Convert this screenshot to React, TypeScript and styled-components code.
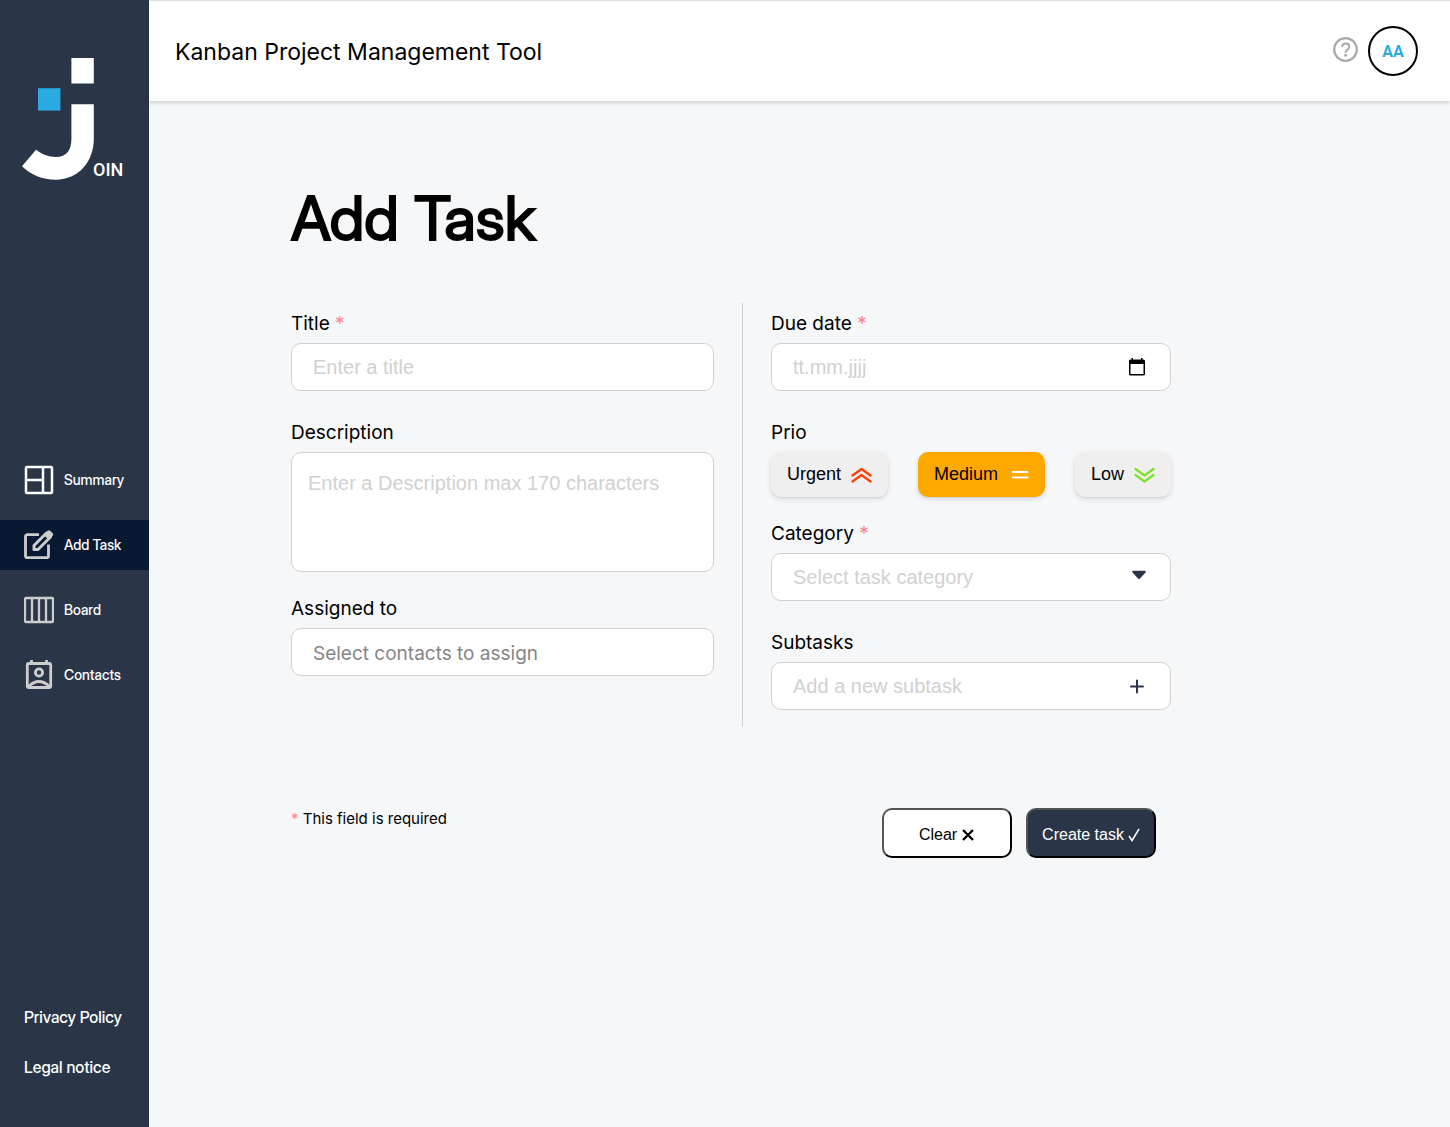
import React, { useState } from "react";
import styled, { createGlobalStyle, css } from "styled-components";

const GlobalStyle = createGlobalStyle`
  *, *::before, *::after { box-sizing: border-box; }
  body {
    margin: 0;
    background: #f6f7f8;
    color: #000;
    font-family: Inter, "Liberation Sans", sans-serif;
  }
`;

const arial = `"Liberation Sans", Arial, sans-serif`;
const display = `"Inter Display", Inter, sans-serif`;

const Page = styled.div`
  display: flex;
  min-height: 100vh;
`;

const Sidebar = styled.aside`
  display: flex;
  flex-direction: column;
  flex: 0 0 149px;
  padding: 58px 0 35px;
  background: #2a3647;
`;

const Logo = styled.svg`
  display: block;
  width: 101px;
  height: 124px;
  margin: 0 auto 273px 22px;
`;

const Nav = styled.nav`
  display: flex;
  flex-direction: column;
  gap: 15px;
`;

const NavLink = styled.a<{ $active?: boolean }>`
  display: flex;
  align-items: center;
  gap: 10px;
  height: 50px;
  padding-left: 24px;
  background: ${(p) => (p.$active ? "#091931" : "transparent")};
  color: #fff;
  font-family: ${display};
  font-size: 14px;
  font-weight: 500;
  line-height: 16px;
  text-decoration: none;
`;

const NavIcon = styled.svg`
  flex: none;
  width: 30px;
  height: 30px;
  fill: none;
  stroke: #cdcdcd;
  stroke-width: 3;
  stroke-linejoin: round;
`;

const LegalLinks = styled.div`
  display: flex;
  flex-direction: column;
  margin-top: auto;
  padding-left: 24px;
`;

const LegalLink = styled.a`
  color: #fff;
  font-family: ${display};
  font-size: 16px;
  font-weight: 500;
  line-height: 50px;
  text-decoration: none;
`;

const Content = styled.div`
  flex: 1;
  min-width: 0;
`;

const Header = styled.header`
  display: flex;
  align-items: center;
  justify-content: space-between;
  height: 101px;
  padding: 0 32px 0 26px;
  border-top: 1px solid #dedede;
  background: #fff;
  box-shadow: 0 2px 4px rgba(0, 0, 0, 0.16);
`;

const AppName = styled.span`
  padding-top: 2px;
  font-size: 23px;
`;

const HeaderActions = styled.div`
  display: flex;
  align-items: center;
  gap: 10px;
`;

const HelpLink = styled.a`
  display: flex;
  padding-bottom: 2px;
`;

const Avatar = styled.button`
  width: 50px;
  height: 50px;
  padding: 0;
  border: 2px solid #000;
  border-radius: 50%;
  background: #fff;
  color: #29abe2;
  font: 700 16px Roboto, sans-serif;
`;

const Main = styled.main`
  max-width: 1022px;
  padding: 80px 0 80px 142px;
`;

const Title = styled.h1`
  margin: 0 0 48px;
  font-family: ${display};
  font-size: 61px;
  font-weight: 400;
  line-height: 74px;
  -webkit-text-stroke: 2px #000;
`;

const Columns = styled.div`
  display: grid;
  grid-template-columns: minmax(0, 423fr) 1px minmax(0, 400fr);
  column-gap: 28px;
`;

const Divider = styled.div`
  background: #d1d1d1;
`;

const Column = styled.div`
  padding: 8px 0 17px;
`;

const Field = styled.div<{ $gap?: number }>`
  display: flex;
  flex-direction: column;
  gap: 6px;
  margin-bottom: ${(p) => p.$gap ?? 0}px;
`;

const labelStyle = css`
  font-size: 19px;
  line-height: 26px;
`;

const Label = styled.label`
  ${labelStyle}
`;

const GroupLabel = styled.span`
  ${labelStyle}
`;

const Star = styled.span`
  color: #ff8190;
`;

const boxStyle = css`
  width: 100%;
  border: 1px solid #d1d1d1;
  border-radius: 10px;
  background: #fff;
`;

const Control = styled.div`
  ${boxStyle}
  display: flex;
  align-items: center;
  height: 48px;
  padding: 0 21px;
`;

const Input = styled.input<{ $inter?: boolean }>`
  flex: 1;
  min-width: 0;
  height: 100%;
  padding: ${(p) => (p.$inter ? "2px 0 0" : "0")};
  border: 0;
  outline: 0;
  background: transparent;
  font-family: ${(p) => (p.$inter ? "Inter, sans-serif" : arial)};
  font-size: ${(p) => (p.$inter ? 19 : 20)}px;
  &::placeholder {
    color: ${(p) => (p.$inter ? "#858585" : "#d1d1d1")};
    opacity: 1;
  }
`;

const Textarea = styled.textarea`
  ${boxStyle}
  display: block;
  height: 120px;
  padding: 18px 16px;
  resize: none;
  font: 20px/24px ${arial};
  &::placeholder {
    color: #d1d1d1;
    opacity: 1;
  }
`;

const SelectControl = styled(Control)`
  display: grid;
  padding: 0;
  align-items: center;
  & > * {
    grid-area: 1 / 1;
  }
  & > svg {
    justify-self: end;
    margin: 0 23px 4px 0;
    pointer-events: none;
  }
`;

const Select = styled.select`
  appearance: none;
  width: 100%;
  height: 46px;
  padding: 0 48px 0 21px;
  border: 0;
  border-radius: 10px;
  background: transparent;
  color: #d1d1d1;
  font: 20px ${arial};
`;

const IconButton = styled.button`
  display: flex;
  align-items: center;
  justify-content: center;
  width: 24px;
  height: 24px;
  padding: 0;
  border: 0;
  background: transparent;
`;

const PrioRow = styled.div`
  display: flex;
  justify-content: space-between;
`;

const PrioButton = styled.button<{ $selected: boolean }>`
  display: flex;
  align-items: center;
  gap: 10px;
  height: 45px;
  padding: 0 16px;
  border: 0;
  border-radius: 10px;
  background: ${(p) => (p.$selected ? "#ffa800" : "#efefef")};
  box-shadow: 0 2px 5px rgba(50, 50, 105, 0.15), 0 1px 1px rgba(0, 0, 0, 0.05);
  color: #000;
  font: 18px ${arial};
`;

const FormFooter = styled.div`
  display: flex;
  justify-content: space-between;
  margin-top: 81px;
  padding-right: 15px;
`;

const Required = styled.span`
  font-size: 15px;
  line-height: 22px;
`;

const Buttons = styled.div`
  display: flex;
  gap: 14px;
`;

const ActionButton = styled.button<{ $primary?: boolean }>`
  display: flex;
  align-items: center;
  justify-content: center;
  gap: 4px;
  width: 130px;
  height: 50px;
  padding: 3px 0 0;
  border: 2px outset #000;
  border-radius: 10px;
  background: ${(p) => (p.$primary ? "#2a3647" : "#fff")};
  color: ${(p) => (p.$primary ? "#fff" : "#000")};
  font: 16px ${arial};
  white-space: nowrap;
`;

const navItems = [
  {
    label: "Summary",
    icon: (
      <g stroke="#fff" strokeWidth="2.5">
        <rect x="2" y="2" width="26" height="26" rx="1" />
        <path d="M19 2v26M2 15h17" />
      </g>
    ),
  },
  {
    label: "Add Task",
    icon: (
      <>
        <path d="M15 4.700H3.500a2 2 0 0 0-2 2v19a2 2 0 0 0 2 2h19a2 2 0 0 0 2-2V14.500" strokeWidth="2.800" />
        <path d="M10 19.500v-4L22.500 3l4 4L14 19.500z" strokeWidth="3" />
        <path d="M19.500 5l4.200-4.200q1.300-1 2.500 0l2.500 2.500q1 1.300 0 2.500L25 10z" fill="#cdcdcd" stroke="none" />
      </>
    ),
  },
  {
    label: "Board",
    icon: (
      <g strokeWidth="2.300">
        <rect x="1" y="3" width="28" height="24" rx="1" />
        <path d="M8 3V27M15 3V27M22 3V27" />
      </g>
    ),
  },
  {
    label: "Contacts",
    icon: (
      <>
        <rect x="3.300" y="3.500" width="23.400" height="24" rx="1.500" strokeWidth="2.800" />
        <path d="M7.500 0v4M22.500 0v4" strokeWidth="2.800" />
        <circle cx="15" cy="12.500" r="3.600" strokeWidth="2.800" />
        <path d="M4.500 26.500Q15 16.500 25.500 26.500" strokeWidth="2.800" />
      </>
    ),
  },
];

const prios = [
  {
    name: "Urgent",
    icon: (
      <svg width="21" height="16" viewBox="0 0 21 16" fill="none" stroke="#ff3d00" strokeWidth="2.200" strokeLinecap="round" strokeLinejoin="round">
        <path d="M1.500 8.500l9-6.500 9 6.500M1.500 14.500l9-6.500 9 6.500" />
      </svg>
    ),
  },
  {
    name: "Medium",
    icon: (
      <svg width="21" height="8" viewBox="0 0 21 8" fill="none" stroke="#fff" strokeWidth="2" strokeLinecap="round">
        <path d="M5 1h14.500M5 6.500h14.500" />
      </svg>
    ),
  },
  {
    name: "Low",
    icon: (
      <svg width="21" height="16" viewBox="0 0 21 16" fill="none" stroke="#7ae229" strokeWidth="2.200" strokeLinecap="round" strokeLinejoin="round">
        <path d="M1.500 2l9 6.500 9-6.500M1.500 8l9 6.500 9-6.500" />
      </svg>
    ),
  },
];

export default function App() {
  const [prio, setPrio] = useState("Medium");

  return (
    <>
      <GlobalStyle />
      <Page>
        <Sidebar>
          <Logo viewBox="0 0 101 124" role="img" aria-label="Join">
            <path fill="#fff" d="M49.400 0h22.400v25.500H49.400z" />
            <path fill="#29abe2" d="M16 30.200h22.400v22.400H16z" />
            <path
              fill="#fff"
              d="M49.400 46.300h22.400V81c0 22.500-15.200 40.700-38 40.700-13.500 0-25-5-33.800-13.500L14 91.800c6 4.500 12 7.200 20 7.200 10.500 0 15.400-7 15.400-18z"
            />
            <text x="71" y="118" fill="#fff" fontFamily="Roboto, sans-serif" fontSize="18" fontWeight="500">
              OIN
            </text>
          </Logo>
          <Nav>
            {navItems.map((item) => (
              <NavLink key={item.label} href="#" $active={item.label === "Add Task"}>
                <NavIcon viewBox="0 0 30 30" aria-hidden="true">
                  {item.icon}
                </NavIcon>
                {item.label}
              </NavLink>
            ))}
          </Nav>
          <LegalLinks>
            <LegalLink href="#">Privacy Policy</LegalLink>
            <LegalLink href="#">Legal notice</LegalLink>
          </LegalLinks>
        </Sidebar>

        <Content>
          <Header>
            <AppName>Kanban Project Management Tool</AppName>
            <HeaderActions>
              <HelpLink href="#" aria-label="Help">
                <svg width="25" height="26" viewBox="0 0 25 26" fill="none" stroke="#a8a8a8" strokeWidth="2.200">
                  <circle cx="12.500" cy="12.500" r="11.300" />
                  <path d="M9 9.700c.4-2 1.700-3.200 3.700-3.200 2.100 0 3.600 1.300 3.600 3.200 0 2.800-3.700 3.200-3.700 6" strokeWidth="2" />
                  <circle cx="12.500" cy="18.300" r="1.500" fill="#a8a8a8" stroke="none" />
                </svg>
              </HelpLink>
              <Avatar type="button">AA</Avatar>
            </HeaderActions>
          </Header>

          <Main>
            <Title>Add Task</Title>
            <form onSubmit={(e) => e.preventDefault()}>
              <Columns>
                <Column>
                  <Field $gap={29}>
                    <Label htmlFor="title">
                      Title <Star>*</Star>
                    </Label>
                    <Control>
                      <Input id="title" placeholder="Enter a title" />
                    </Control>
                  </Field>
                  <Field $gap={24}>
                    <Label htmlFor="description">Description</Label>
                    <Textarea id="description" maxLength={170} placeholder="Enter a Description max 170 characters" />
                  </Field>
                  <Field>
                    <Label htmlFor="assigned">Assigned to</Label>
                    <Control>
                      <Input id="assigned" $inter placeholder="Select contacts to assign" />
                    </Control>
                  </Field>
                </Column>
                <Divider />
                <Column>
                  <Field $gap={29}>
                    <Label htmlFor="due">
                      Due date <Star>*</Star>
                    </Label>
                    <Control>
                      <Input id="due" placeholder="tt.mm.jjjj" />
                      <IconButton type="button" aria-label="Open calendar">
                        <svg width="16" height="18" viewBox="0 0 16 18">
                          <path d="M2.500 0h1.500v1.500h8V0h1.500v1.500h1Q16 1.500 16 3v13q0 1.500-1.500 1.500h-13Q0 17.500 0 16V3Q0 1.500 1.500 1.500h1zM1.500 6v10h13V6z" fillRule="evenodd" />
                        </svg>
                      </IconButton>
                    </Control>
                  </Field>
                  <Field $gap={24} role="group" aria-labelledby="prio-label">
                    <GroupLabel id="prio-label">Prio</GroupLabel>
                    <PrioRow>
                      {prios.map((p) => (
                        <PrioButton
                          key={p.name}
                          type="button"
                          $selected={p.name === prio}
                          aria-pressed={p.name === prio}
                          onClick={() => setPrio(p.name)}
                        >
                          {p.name}
                          {p.icon}
                        </PrioButton>
                      ))}
                    </PrioRow>
                  </Field>
                  <Field $gap={29}>
                    <Label htmlFor="category">
                      Category <Star>*</Star>
                    </Label>
                    <SelectControl>
                      <Select id="category" defaultValue="">
                        <option value="">Select task category</option>
                      </Select>
                      <svg width="16" height="10" viewBox="0 0 16 10" aria-hidden="true">
                        <path d="M2.200 1.800h11.600L8 8z" fill="#2a3647" stroke="#2a3647" strokeWidth="2" strokeLinejoin="round" />
                      </svg>
                    </SelectControl>
                  </Field>
                  <Field>
                    <Label htmlFor="subtask">Subtasks</Label>
                    <Control>
                      <Input id="subtask" placeholder="Add a new subtask" />
                      <IconButton type="button" aria-label="Add subtask">
                        <svg width="16" height="16" viewBox="0 0 16 16" stroke="#2a3647" strokeWidth="2" strokeLinecap="round">
                          <path d="M8 2.500v12M2 8.500h12" />
                        </svg>
                      </IconButton>
                    </Control>
                  </Field>
                </Column>
              </Columns>
              <FormFooter>
                <Required>
                  <Star>*</Star> This field is required
                </Required>
                <Buttons>
                  <ActionButton type="reset">
                    Clear
                    <svg width="14" height="14" viewBox="0 0 14 14" fill="none" stroke="#000" strokeWidth="2.300" aria-hidden="true">
                      <path d="M2 2l10 10M12 2L2 12" />
                    </svg>
                  </ActionButton>
                  <ActionButton type="submit" $primary>
                    Create task
                    <svg width="12" height="14" viewBox="0 0 12 14" fill="none" stroke="#fff" strokeWidth="1.500" aria-hidden="true">
                      <path d="M1 8l3 4.500L11 1" />
                    </svg>
                  </ActionButton>
                </Buttons>
              </FormFooter>
            </form>
          </Main>
        </Content>
      </Page>
    </>
  );
}
